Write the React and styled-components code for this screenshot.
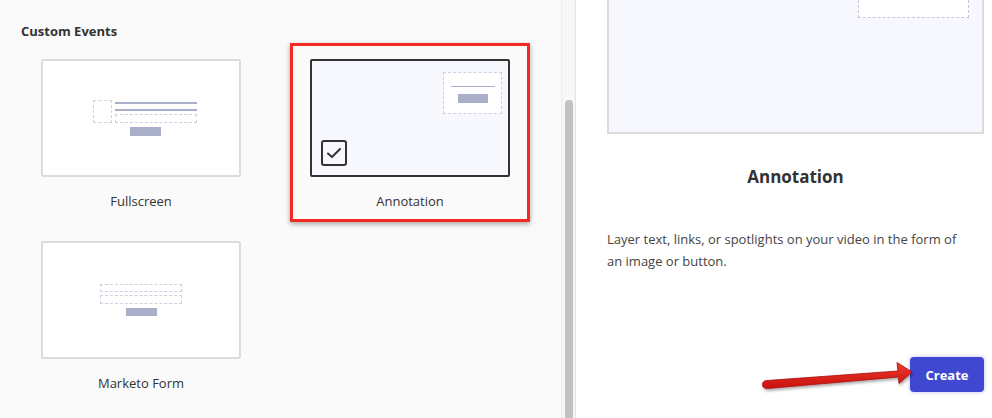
import React from 'react'
import styled, { createGlobalStyle } from 'styled-components'

const GlobalStyle = createGlobalStyle`
  html, body {
    margin: 0;
    padding: 0;
    background: #ffffff;
    font-family: "Open Sans", Lato, "Liberation Sans", sans-serif;
    color: #333;
  }
`

const Page = styled.div`
  position: relative;
  display: flex;
  width: 992px;
  height: 418px;
  overflow: hidden;
`

const LeftPanel = styled.div`
  box-sizing: border-box;
  width: 561px;
  flex-shrink: 0;
  padding: 23px 0 0 21px;
  background: #fafafa;
`

const SectionTitle = styled.h3`
  margin: 0 0 4px;
  font-size: 13px;
  line-height: 16px;
  font-weight: 700;
  color: #333;
`

const Grid = styled.div`
  display: grid;
  grid-template-columns: 240px 240px;
  column-gap: 29px;
  row-gap: 3px;
`

const Card = styled.div`
  box-sizing: border-box;
  width: 240px;
  padding: 13px 17px 10px;
  display: flex;
  flex-direction: column;
  align-items: center;
  border: 3px solid ${p => (p.$selected ? '#f22a24' : 'transparent')};
  box-shadow: ${p => (p.$selected ? '0 2px 5px rgba(0,0,0,0.35)' : 'none')};
`

const Thumb = styled.div`
  box-sizing: border-box;
  width: 200px;
  height: 118px;
  border: 2px solid ${p => (p.$selected ? '#333' : '#dcdcdc')};
  border-radius: 2px;
  background: ${p => (p.$selected ? '#f7f8fd' : '#fff')};
  display: flex;
  flex-direction: column;
  align-items: center;
  justify-content: center;
`

const CardLabel = styled.div`
  margin-top: 16px;
  font-size: 13px;
  line-height: 16px;
  color: #333;
`

const Row = styled.div`
  display: flex;
  gap: 3px;
`

const Stack = styled.div`
  display: flex;
  flex-direction: column;
  align-items: ${p => p.$align || 'center'};
  gap: ${p => p.$gap || 0}px;
  margin-left: ${p => p.$ml || 0}px;
`

const DashedBox = styled.div`
  box-sizing: border-box;
  width: ${p => p.$w}px;
  height: ${p => p.$h}px;
  margin-top: ${p => p.$mt || 0}px;
  border: 1px dashed #cfcfe4;
  background: #fff;
`

const Bar = styled.div`
  width: ${p => p.$w}px;
  height: ${p => p.$h}px;
  background: #a9afc8;
  margin-top: ${p => p.$mt || 0}px;
`

const AnnotationThumb = styled(Thumb)`
  align-items: stretch;
  justify-content: space-between;
  padding: 11px 6px 9px 9px;
`

const CornerBox = styled(DashedBox)`
  align-self: flex-end;
  display: flex;
  flex-direction: column;
  align-items: center;
  padding-top: 13px;
`

const CheckBox = styled.div`
  box-sizing: border-box;
  width: 26px;
  height: 26px;
  border: 2px solid #333;
  border-radius: 3px;
  display: flex;
  align-items: center;
  justify-content: center;
`

const Track = styled.div`
  box-sizing: border-box;
  width: 15px;
  flex-shrink: 0;
  border-left: 1px solid #ececec;
  border-right: 1px solid #e4e4e4;
  background: #f7f7f7;
  display: flex;
  justify-content: center;
`

const ThumbBar = styled.div`
  width: 8px;
  margin-top: 100px;
  border-radius: 4px 4px 0 0;
  background: #c1c1c1;
`

const RightPanel = styled.div`
  flex: 1;
  background: #fff;
  padding: 0 8px 26px 31px;
  display: flex;
  flex-direction: column;
`

const Preview = styled.div`
  box-sizing: border-box;
  height: 134px;
  border: 2px solid #dcdcdc;
  border-top: none;
  background: #f7f8fd;
  display: flex;
  justify-content: flex-end;
  padding-right: 13px;
`

const PreviewCorner = styled.div`
  box-sizing: border-box;
  width: 111px;
  height: 18px;
  border: 1px dashed #c8c4e0;
  border-top: none;
  background: #fff;
`

const Title = styled.h2`
  margin: 32px 0 0;
  text-align: center;
  font-size: 17px;
  line-height: 22px;
  font-weight: 700;
  color: #333;
`

const Description = styled.p`
  margin: 40px 0 0;
  font-size: 13px;
  line-height: 22px;
  color: #444;
  max-width: 360px;
`

const CreateButton = styled.button`
  margin-top: auto;
  align-self: flex-end;
  width: 74px;
  height: 35px;
  border: none;
  border-radius: 4px;
  background: #4048d2;
  color: #fff;
  font-family: inherit;
  font-size: 13px;
  font-weight: 700;
  box-shadow: 0 0 4px rgba(64, 72, 210, 0.35);
`

const ArrowOverlay = styled.svg`
  position: absolute;
  left: 755px;
  top: 355px;
  overflow: visible;
`

const FullscreenArt = () => (
  <Stack $gap={4} $ml={8}>
    <Row>
      <DashedBox $w={19} $h={23} />
      <Stack $align="stretch">
        <Bar $w={82} $h={2} $mt={2} />
        <Bar $w={82} $h={2} $mt={5} />
        <DashedBox $w={82} $h={9} $mt={3} />
      </Stack>
    </Row>
    <Bar $w={31} $h={9} />
  </Stack>
)

const MarketoArt = () => (
  <Stack $gap={3}>
    <DashedBox $w={82} $h={8} />
    <DashedBox $w={82} $h={9} />
    <Bar $w={31} $h={8} $mt={1} />
  </Stack>
)

const AnnotationArt = () => (
  <>
    <CornerBox $w={59} $h={42}>
      <Bar $w={44} $h={1} />
      <Bar $w={30} $h={9} $mt={7} />
    </CornerBox>
    <CheckBox>
      <svg width="16" height="12" viewBox="0 0 16 12">
        <path d="M2 6.5 L6 10 L14 2" fill="none" stroke="#333" strokeWidth="2" strokeLinecap="round" strokeLinejoin="round" />
      </svg>
    </CheckBox>
  </>
)

const events = [
  { name: 'Fullscreen', art: <FullscreenArt /> },
  { name: 'Annotation', selected: true },
  { name: 'Marketo Form', art: <MarketoArt /> },
]

const App = () => {
  return (
    <Page>
      <GlobalStyle />
      <LeftPanel>
        <SectionTitle>Custom Events</SectionTitle>
        <Grid>
          {events.map((ev) => (
            <Card key={ev.name} $selected={ev.selected}>
              {ev.selected ? (
                <AnnotationThumb $selected>
                  <AnnotationArt />
                </AnnotationThumb>
              ) : (
                <Thumb>{ev.art}</Thumb>
              )}
              <CardLabel>{ev.name}</CardLabel>
            </Card>
          ))}
        </Grid>
      </LeftPanel>

      <Track>
        <ThumbBar />
      </Track>

      <RightPanel>
        <Preview>
          <PreviewCorner />
        </Preview>
        <Title>Annotation</Title>
        <Description>
          Layer text, links, or spotlights on your video in the form of an image or button.
        </Description>
        <CreateButton>Create</CreateButton>
      </RightPanel>

      <ArrowOverlay width="160" height="40">
        <defs>
          <linearGradient id="arrowRed" x1="0" y1="0" x2="0" y2="1">
            <stop offset="0" stopColor="#f03a2e" />
            <stop offset="1" stopColor="#c8120e" />
          </linearGradient>
          <filter id="arrowShadow" x="-10%" y="-50%" width="120%" height="200%">
            <feDropShadow dx="1" dy="2" stdDeviation="1.5" floodColor="#000" floodOpacity="0.35" />
          </filter>
        </defs>
        <g filter="url(#arrowShadow)">
          <path
            d="M12 25.5 L143 16 L142 7.5 L157 17 L144 28.5 L143.5 22 L12.5 33.5 Q7.5 33.5 7.5 29.5 Q7.5 25.8 12 25.5 Z"
            fill="url(#arrowRed)"
            stroke="#a80c0a"
            strokeWidth="0.8"
            strokeLinejoin="round"
          />
        </g>
      </ArrowOverlay>
    </Page>
  )
}

export default App
